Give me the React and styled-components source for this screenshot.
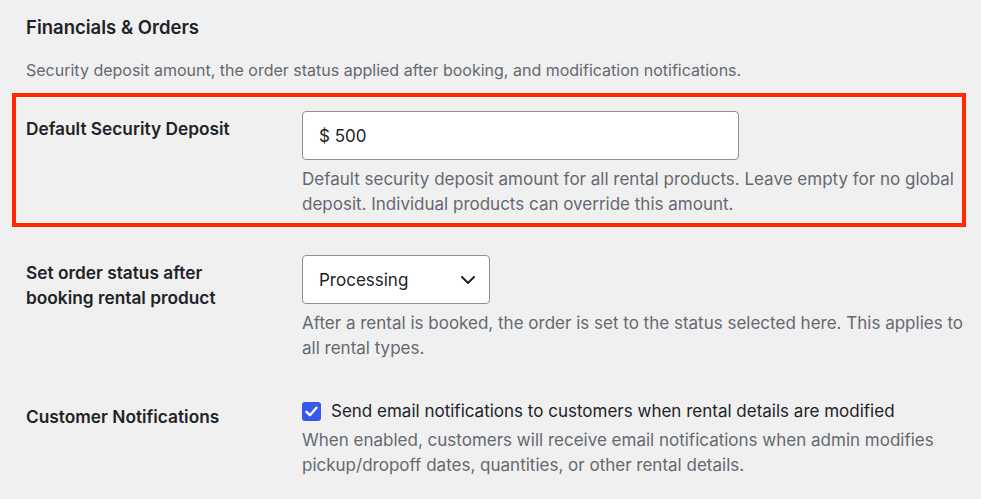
import React from 'react';
import styled, { createGlobalStyle } from 'styled-components';

const Global = createGlobalStyle`
  html, body {
    margin: 0;
    padding: 0;
    background: #f0f0f1;
  }
  body {
    font-family: Inter, "Noto Sans", sans-serif;
    color: #1d2327;
    -webkit-font-smoothing: antialiased;
  }
`;

const Page = styled.div`
  width: 981px;
  height: 499px;
  box-sizing: border-box;
  padding: 0 15px 0 12px;
  overflow: hidden;
`;

const Heading = styled.h2`
  margin: 0;
  padding: 15px 0 0 14px;
  font-size: 18.5px;
  font-weight: 600;
  line-height: 25px;
`;

const Intro = styled.p`
  margin: 0;
  padding: 18px 0 0 14px;
  font-size: 16px;
  line-height: 25px;
  color: #646970;
`;

const Table = styled.div`
  display: flex;
  flex-direction: column;
  gap: 10px;
  margin-top: 10px;
`;

const Row = styled.div`
  display: grid;
  grid-template-columns: 276px 1fr;
  padding: 14px 0 6px 10px;
  border: 4px solid ${(p) => (p.$highlight ? '#ff2a00' : 'transparent')};
`;

const Label = styled.div`
  padding-top: 5px;
  font-size: 17.3px;
  font-weight: 600;
  line-height: 25px;
  color: #1d2327;
  white-space: nowrap;
`;

const Field = styled.div`
  display: flex;
  flex-direction: column;
  align-items: flex-start;
  min-width: 0;
`;

const TextInput = styled.div`
  box-sizing: border-box;
  width: 437px;
  height: 49px;
  padding: 0 16px;
  display: flex;
  align-items: center;
  background: #fff;
  border: 1px solid #8c8f94;
  border-radius: 4px;
  font-size: 17px;
  color: #1d2327;
`;

const Select = styled(TextInput)`
  width: 188px;
  justify-content: space-between;
  padding-right: 14px;
`;

const Help = styled.p`
  margin: ${(p) => (p.$tight ? '4px' : '7px')} 0 0;
  font-size: 17px;
  line-height: 25px;
  color: #646970;
  white-space: nowrap;
`;

const CheckLine = styled.label`
  display: flex;
  align-items: center;
  gap: 10px;
  font-size: 17px;
  line-height: 25px;
  color: #1d2327;
  white-space: nowrap;
`;

const Box = styled.span`
  flex: none;
  width: 19px;
  height: 19px;
  border-radius: 3px;
  background: #3858e9;
  display: flex;
  align-items: center;
  justify-content: center;
`;

const Chevron = () => (
  <svg width="14" height="8" viewBox="0 0 14 8" fill="none">
    <path d="M1 1l6 6 6-6" stroke="#1d2327" strokeWidth="2" strokeLinecap="round" strokeLinejoin="round" />
  </svg>
);

const Check = () => (
  <svg width="13" height="11" viewBox="0 0 13 11" fill="none">
    <path d="M1.5 5.8l3.4 3.4L11.5 1.8" stroke="#fff" strokeWidth="2.4" strokeLinecap="round" strokeLinejoin="round" />
  </svg>
);

const App = () => (
  <Page>
    <Global />
    <Heading>Financials &amp; Orders</Heading>
    <Intro>Security deposit amount, the order status applied after booking, and modification notifications.</Intro>
    <Table>
      <Row $highlight>
        <Label>Default Security Deposit</Label>
        <Field>
          <TextInput>$ 500</TextInput>
          <Help>
            Default security deposit amount for all rental products. Leave empty for no global
            <br />
            deposit. Individual products can override this amount.
          </Help>
        </Field>
      </Row>
      <Row>
        <Label>
          Set order status after
          <br />
          booking rental product
        </Label>
        <Field>
          <Select>
            Processing
            <Chevron />
          </Select>
          <Help>
            After a rental is booked, the order is set to the status selected here. This applies to
            <br />
            all rental types.
          </Help>
        </Field>
      </Row>
      <Row>
        <Label>Customer Notifications</Label>
        <Field>
          <CheckLine>
            <Box>
              <Check />
            </Box>
            Send email notifications to customers when rental details are modified
          </CheckLine>
          <Help $tight>
            When enabled, customers will receive email notifications when admin modifies
            <br />
            pickup/dropoff dates, quantities, or other rental details.
          </Help>
        </Field>
      </Row>
    </Table>
  </Page>
);

export default App;
